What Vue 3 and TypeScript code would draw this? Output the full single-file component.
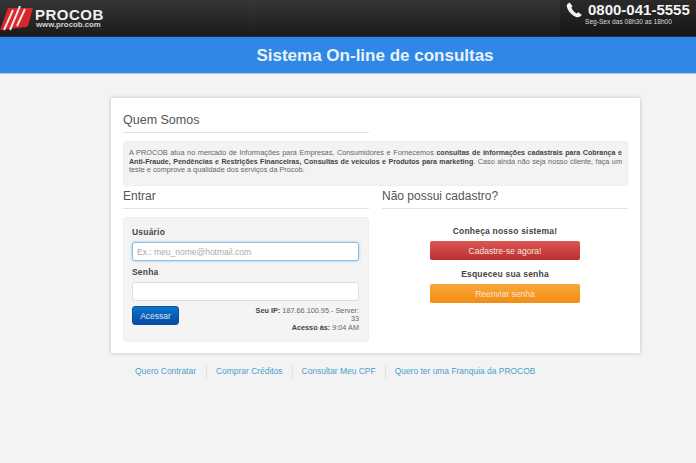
<script setup lang="ts">
const links: string[] = ['Quero Contratar', 'Comprar Créditos', 'Consultar Meu CPF', 'Quero ter uma Franquia da PROCOB']
</script>

<template>
  <div class="page">
    <header class="topbar">
      <div class="brand">
        <svg class="logo" width="34" height="26" viewBox="0 0 34 26">
          <path d="M8 2 L33 2 L28 20 L26 21 L0 24 Z" fill="#d8262c" />
          <path d="M4 24 L13 4 M10 24 L20 0 M17 20 L25 3" stroke="#f4e4e0" stroke-width="2" fill="none" />
        </svg>
        <div class="brand-text">
          <div class="brand-name">PROCOB</div>
          <div class="brand-url">www.procob.com</div>
        </div>
      </div>
      <div class="contact">
        <div class="phone">
          <svg width="16" height="16" viewBox="0 0 16 16">
            <path d="M3.6 0.6 L1.4 2 C0.4 3 0.7 5.2 2 7.8 C3.6 10.8 6.6 14 10 15 C12 15.6 14 15 15.4 13.6 L15.6 12.8 L12.4 10.2 L10.6 11.4 C8.6 10.8 6 7.6 5.4 5.2 L6.6 4.2 Z" fill="#f4f4f4" />
          </svg>
          <span>0800-041-5555</span>
        </div>
        <div class="hours">Seg-Sex das 08h30 as 18h00</div>
      </div>
    </header>

    <div class="banner">Sistema On-line de consultas</div>

    <main class="card">
      <h2 class="heading about-heading">Quem Somos</h2>
      <div class="about">
        A PROCOB atua no mercado de Informações para Empresas, Consumidores e Fornecemos
        <b>consultas de informações cadastrais para Cobrança e Anti-Fraude, Pendências e Restrições Financeiras, Consultas de veículos e Produtos para marketing</b>.
        Caso ainda não seja nosso cliente, faça um teste e comprove a qualidade dos serviços da Procob.
      </div>
      <div class="columns">
        <section class="col">
          <h2 class="heading">Entrar</h2>
          <form class="login" @submit.prevent>
            <label class="label">Usuário</label>
            <input class="field focused" type="text" placeholder="Ex.: meu_nome@hotmail.com" />
            <label class="label">Senha</label>
            <input class="field" type="password" />
            <div class="login-foot">
              <button class="btn-login" type="button">Acessar</button>
              <div class="info">
                <div><b>Seu IP:</b> 187.66.100.95 - Server: 33</div>
                <div class="access"><b>Acesso às:</b> 9:04 AM</div>
              </div>
            </div>
          </form>
        </section>
        <section class="col">
          <h2 class="heading">Não possui cadastro?</h2>
          <div class="actions">
            <p class="prompt first">Conheça nosso sistema!</p>
            <button class="btn btn-red" type="button">Cadastre-se agora!</button>
            <p class="prompt second">Esqueceu sua senha</p>
            <button class="btn btn-orange" type="button">Reenviar senha</button>
          </div>
        </section>
      </div>
    </main>

    <nav class="links">
      <a v-for="link in links" :key="link" href="#" class="link">{{ link }}</a>
    </nav>
  </div>
</template>

<style>
html, body { margin: 0; background: #f2f2f2; }
</style>

<style scoped>
.page {
  width: 696px;
  height: 463px;
  overflow: hidden;
  background: #f3f3f3;
  font-family: "Liberation Sans", Arial, sans-serif;
  display: flex;
  flex-direction: column;
}
.topbar {
  height: 36px;
  background: linear-gradient(#363636, #1b1b1b);
  border-bottom: 1px solid #15314f;
  display: flex;
  justify-content: space-between;
  flex: none;
}
.brand { display: flex; align-items: flex-start; padding-top: 6px; }
.logo { margin-right: 1px; }
.brand-text { padding-top: 2px; color: #f0f0f0; font-weight: 700; }
.brand-name { font-size: 15px; line-height: 13px; letter-spacing: 0.5px; }
.brand-url { font-size: 7.8px; line-height: 7px; padding-left: 1px; color: #d5d5d5; }
.contact {
  width: 136px;
  background: linear-gradient(#2a2a2a, #161616);
  color: #f2f2f2;
}
.phone {
  display: flex;
  align-items: center;
  padding: 0 0 0 6px;
  height: 19px;
  font-size: 15px;
  font-weight: 700;
  gap: 6px;
}
.phone span { white-space: nowrap; }
.hours { font-size: 6.6px; line-height: 6px; padding-left: 25px; white-space: nowrap; color: #ddd; }
.banner {
  height: 36px;
  flex: none;
  box-sizing: content-box;
  padding-left: 54px;
  background: #2f88e6;
  border-bottom: 1px solid #a9cdee;
  color: #e9f2fb;
  font-size: 17px;
  font-weight: 700;
  line-height: 37px;
  text-align: center;
}
.card {
  width: 505px;
  height: 231px;
  margin: 24px 0 0 111px;
  padding: 12px;
  background: #fff;
  box-shadow: 0 0 4px rgba(0, 0, 0, 0.22);
  flex: none;
}
.heading {
  margin: 0;
  height: 19px;
  border-bottom: 1px solid #e2e2e2;
  color: #555;
  font-size: 12px;
  font-weight: 400;
  line-height: 15px;
}
.about-heading { width: 246px; height: 22px; font-size: 12.5px; line-height: 21px; }
.about {
  margin-top: 8px;
  height: 45px;
  box-sizing: border-box;
  padding: 7px 5px 0;
  background: #f3f3f3;
  border: 1px solid #eee;
  border-radius: 3px;
  color: #666;
  font-size: 7.3px;
  line-height: 8.6px;
  text-align: justify;
}
.about b { color: #444; font-size: 7.1px; }
.columns { display: flex; gap: 13px; margin-top: 3px; }
.col { width: 246px; }
.login {
  margin-top: 8px;
  height: 125px;
  box-sizing: border-box;
  padding: 9px 8px 0;
  background: #f4f4f4;
  border: 1px solid #eee;
  border-radius: 3px;
  display: flex;
  flex-direction: column;
}
.label { font-size: 8.5px; font-weight: 700; color: #444; line-height: 11px; letter-spacing: 0.2px; }
.field {
  display: block;
  box-sizing: border-box;
  width: 227px;
  height: 19px;
  margin: 4px 0 6px;
  padding: 0 4px;
  background: #fff;
  border: 1px solid #ddd;
  border-radius: 3px;
  font: 8.5px "Liberation Sans", Arial, sans-serif;
  outline: none;
}
.field::placeholder { color: #aaa; }
.focused { border-color: #8fbce0; box-shadow: 0 0 3px rgba(82, 168, 236, 0.6); }
.login-foot { display: flex; justify-content: space-between; margin-top: -1px; }
.btn-login {
  width: 47px;
  height: 19px;
  padding: 0;
  border: 1px solid #0a4f9e;
  border-radius: 3px;
  background: linear-gradient(#0a75cc, #0a4aa6);
  color: #d8e8f6;
  font: 8.5px "Liberation Sans", Arial, sans-serif;
}
.info {
  width: 110px;
  margin: 1px 1px 0 0;
  text-align: right;
  font-size: 7.3px;
  line-height: 8px;
  color: #666;
}
.info b { color: #444; }
.access { margin-top: 1px; }
.actions { display: flex; flex-direction: column; align-items: center; }
.prompt {
  margin: 0;
  font-size: 8.5px;
  font-weight: 700;
  line-height: 11px;
  color: #444;
  letter-spacing: 0.2px;
}
.first { margin-top: 17px; }
.second { margin-top: 9px; }
.btn {
  width: 150px;
  height: 19px;
  padding: 0;
  border: 0;
  border-radius: 2px;
  color: #f6e4da;
  font: 8.5px "Liberation Sans", Arial, sans-serif;
  margin-top: 4px;
}
.btn-red { background: linear-gradient(#dc5655, #b8302f); }
.btn-orange { background: linear-gradient(#fba73a, #f28d12); }
.links {
  display: flex;
  margin: 11px 0 0 124px;
  align-items: center;
}
.link {
  padding: 0 9px;
  height: 15px;
  line-height: 14px;
  font-size: 8.45px;
  color: #4b9fd0;
  text-decoration: none;
  border-left: 1px solid #e2e2e2;
  white-space: nowrap;
}
.link:first-child { border-left: 0; padding: 0 10px 0 11px; }
</style>
